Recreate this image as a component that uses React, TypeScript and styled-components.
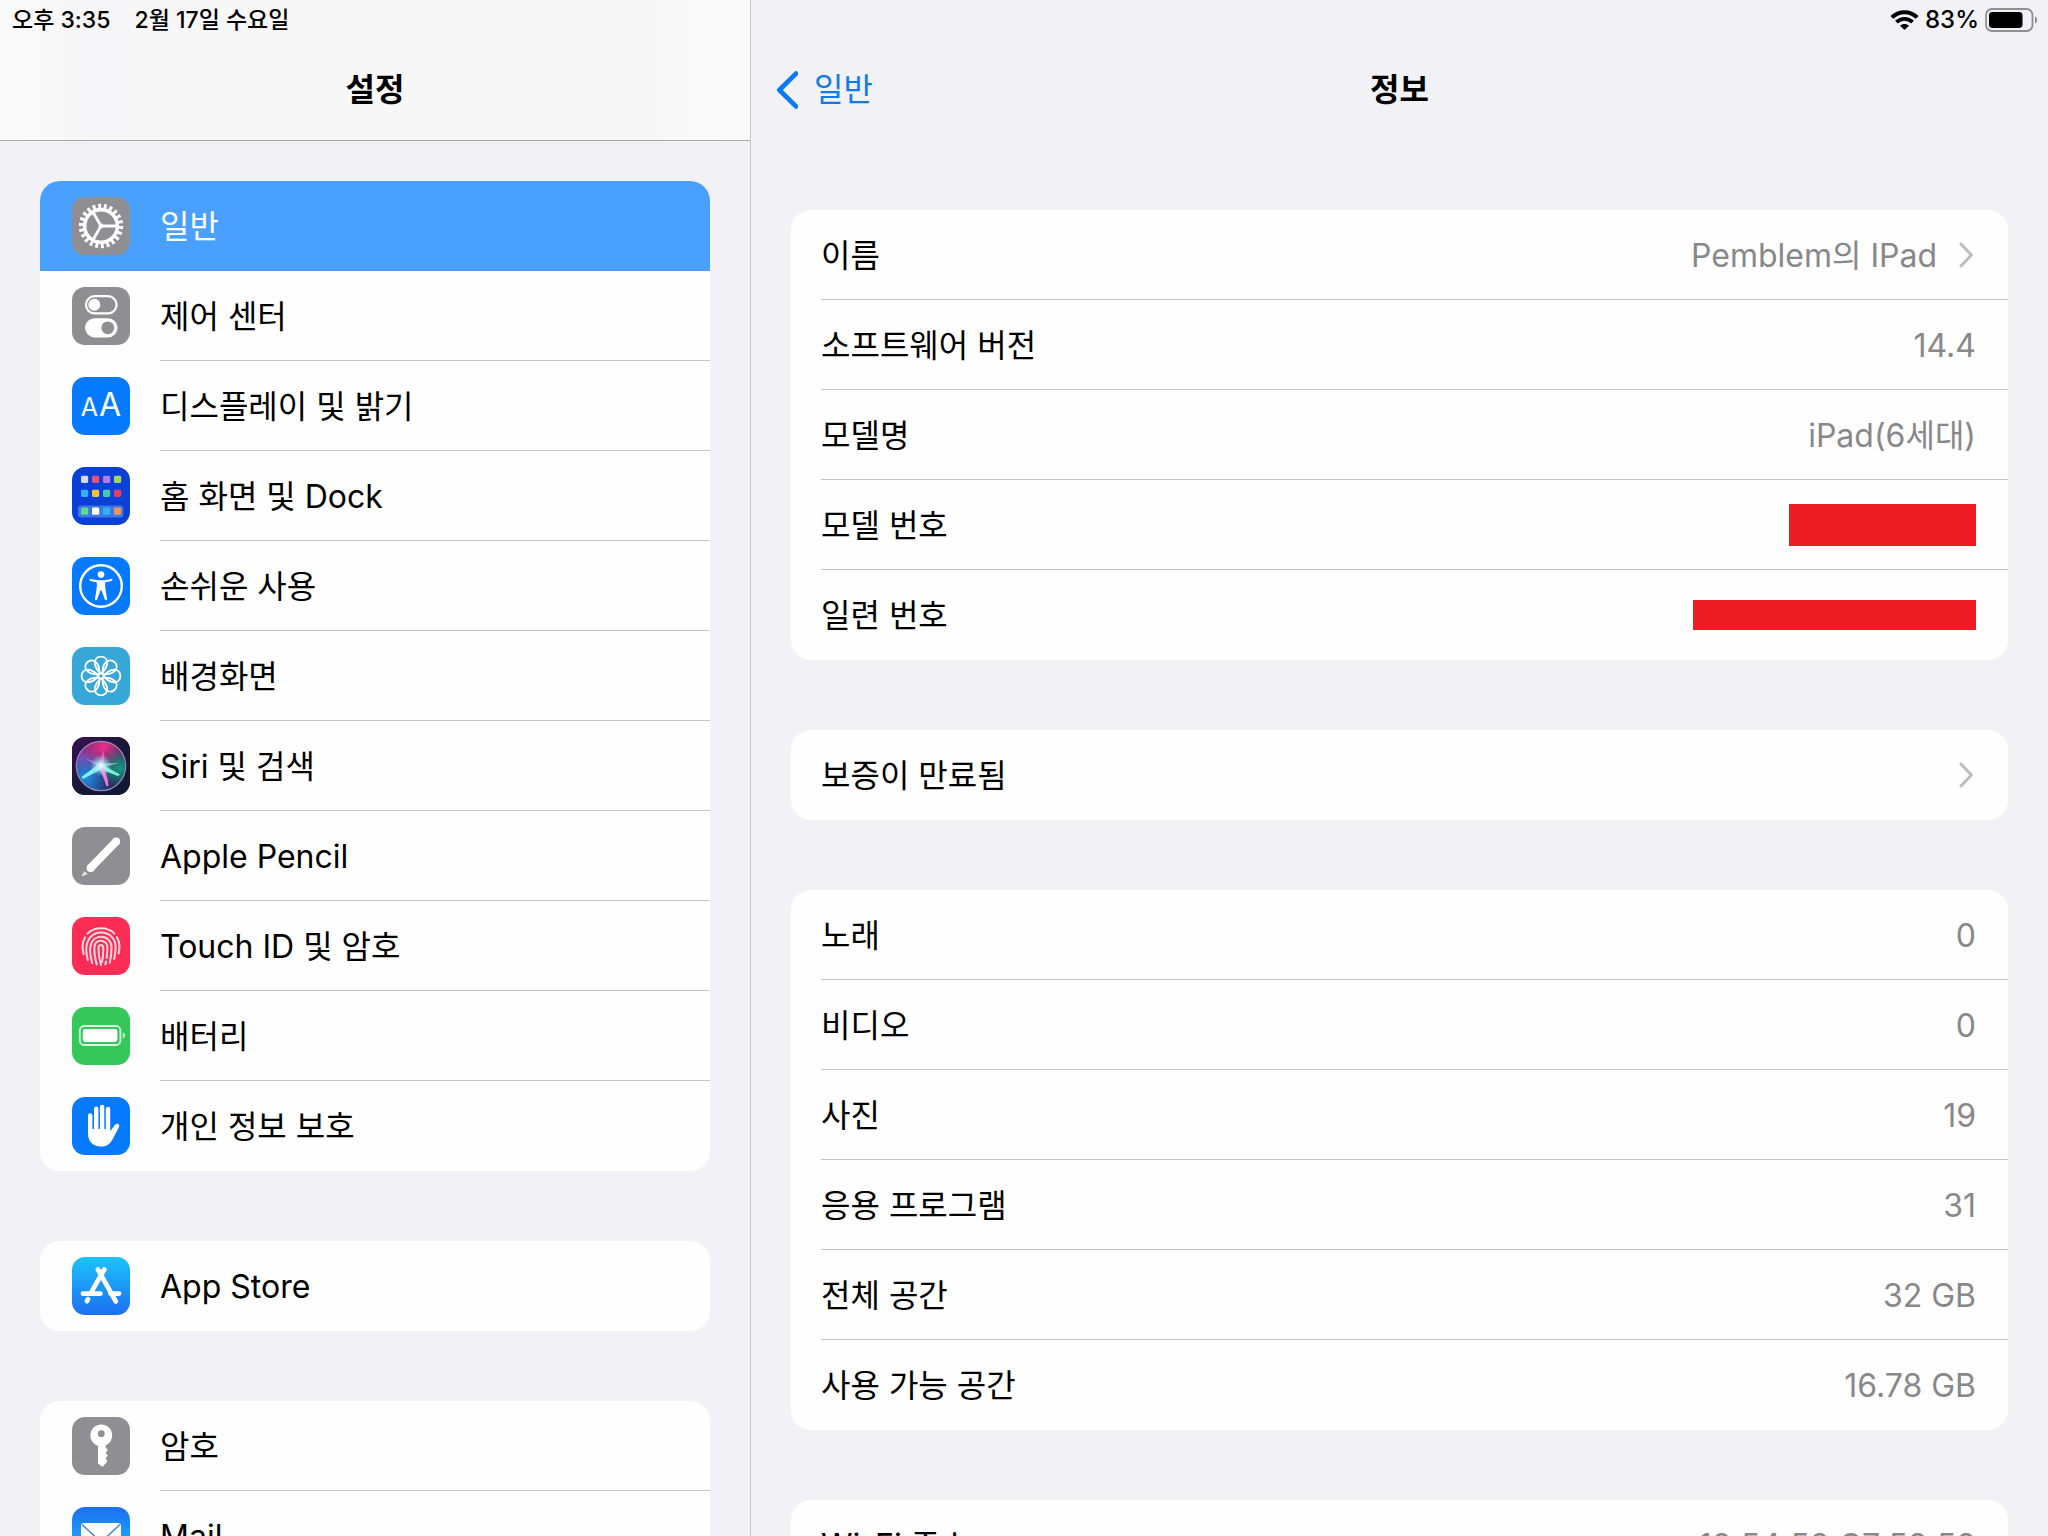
import React from "react";
import styled, { createGlobalStyle, css } from "styled-components";

const GlobalStyle = createGlobalStyle`
  * { box-sizing: border-box; }
  html, body { margin: 0; padding: 0; }
  body {
    background: #f2f1f6;
    color: #000;
    font-family: Inter, "Noto Sans CJK KR", sans-serif;
    font-size: 32px;
    line-height: 40px;
  }
  ul, h1, h2 { margin: 0; padding: 0; font: inherit; list-style: none; }
  a { color: inherit; text-decoration: none; }
`;

const Screen = styled.div`
  display: grid;
  grid-template-columns: 751px minmax(0, 1fr);
  height: 100vh;
  overflow: hidden;
`;

const Pane = styled.section<{ $divided?: boolean }>`
  display: flex;
  flex-direction: column;
  min-width: 0;
  min-height: 0;
  ${(p) => p.$divided && css`border-right: 1px solid #c8c7cc;`}
`;

const Header = styled.header<{ $bar?: boolean }>`
  flex: none;
  border-bottom: 1px solid ${(p) => (p.$bar ? "#a8a8aa" : "transparent")};
  background: ${(p) =>
    p.$bar ? "linear-gradient(90deg, #fafafa 0%, #f6f6f8 14%, #f7f7f7 24%, #f7f7f7 85%, #fafafa 100%)" : "none"};
`;

const StatusBar = styled.div<{ $end?: boolean }>`
  display: flex;
  align-items: center;
  justify-content: ${(p) => (p.$end ? "flex-end" : "flex-start")};
  gap: ${(p) => (p.$end ? 6 : 24)}px;
  height: 40px;
  padding: 0 10px 0 12px;
  font-size: ${(p) => (p.$end ? 24 : 23)}px;
  font-weight: 500;
`;

const NavBar = styled.nav`
  display: grid;
  grid-template-columns: 1fr auto 1fr;
  align-items: center;
  height: 100px;
  padding: 0 24px;
`;

const Title = styled.h1`
  grid-column: 2;
  font-weight: 600;
`;

const BackLink = styled.a`
  display: flex;
  align-items: center;
  gap: 16px;
  justify-self: start;
  color: #0f7ce6;
`;

const Scroller = styled.div<{ $top: number }>`
  flex: 1;
  min-height: 0;
  overflow-y: auto;
  scrollbar-width: none;
  display: flex;
  flex-direction: column;
  gap: 70px;
  padding: ${(p) => p.$top}px 40px 40px;
`;

const Card = styled.ul`
  flex: none;
  border-radius: 20px;
  background: #fefefe;
  overflow: hidden;
`;

const MenuLink = styled.a<{ $selected?: boolean }>`
  display: flex;
  align-items: center;
  gap: 30px;
  height: 90px;
  padding-left: 32px;
  ${(p) =>
    p.$selected &&
    css`
      background: #4aa0ff;
      color: #fff;
    `}
`;

const MenuLabel = styled.span<{ $line: boolean }>`
  display: flex;
  align-items: center;
  flex: 1;
  height: 100%;
  border-bottom: 1px solid ${(p) => (p.$line ? "#c6c6c8" : "transparent")};
`;

const RowText = styled.span`
  padding-top: 3px;
`;

const InfoItem = styled.li`
  padding-left: 30px;
  &:not(:last-child) > * {
    border-bottom-color: #c6c6c8;
  }
`;

const infoRow = css`
  display: flex;
  align-items: center;
  justify-content: space-between;
  height: 90px;
  padding-right: 32px;
  border-bottom: 1px solid transparent;
`;

const InfoRow = styled.div`${infoRow}`;
const InfoLink = styled.a`${infoRow}`;

const Value = styled.span`
  display: flex;
  align-items: center;
  gap: 22px;
  color: #88888a;
`;

const Redaction = styled.span<{ $w: number; $h: number }>`
  width: ${(p) => p.$w}px;
  height: ${(p) => p.$h}px;
  background: #ed1c24;
`;

const IconTile = styled.span<{ $bg: string }>`
  display: flex;
  align-items: center;
  justify-content: center;
  flex: none;
  width: 58px;
  height: 58px;
  border-radius: 13px;
  overflow: hidden;
  color: #fff;
  background: ${(p) => p.$bg};
`;

const Letters = styled.span`
  display: flex;
  align-items: baseline;
  gap: 1px;
  line-height: 32px;
`;
const SmallLetter = styled.span`font-size: 25px;`;
const LargeLetter = styled.span`font-size: 32px;`;

const Glyph = ({ children }: { children: React.ReactNode }) => (
  <svg width="58" height="58" viewBox="0 0 58 58" fill="none" aria-hidden="true">
    {children}
  </svg>
);

const Gear = () => (
  <Glyph>
    <circle cx="29" cy="29" r="19.4" stroke="#fff" strokeWidth="5.6" pathLength="44" strokeDasharray="1.05 0.95" />
    <circle cx="29" cy="29" r="16.4" stroke="#fff" strokeWidth="3.6" />
    <path d="M29 29H45M29 29L21 15.2M29 29L21 42.8" stroke="#fff" strokeWidth="2.8" />
    <circle cx="29" cy="29" r="2.4" fill="#fff" />
  </Glyph>
);

const Toggles = () => (
  <Glyph>
    <rect x="14" y="9.2" width="30.6" height="17.2" rx="8.6" stroke="#fff" strokeWidth="2.2" />
    <circle cx="22.3" cy="17.8" r="6" fill="#fff" />
    <rect x="13" y="31.2" width="32.6" height="19.2" rx="9.6" fill="#fff" />
    <circle cx="35.8" cy="40.8" r="6.4" fill="#8e8e93" />
  </Glyph>
);

const HOME_ROWS = [
  { y: 8.8, colors: ["#cfdcf8", "#e8507c", "#b07af5", "#a4d65e"] },
  { y: 22.8, colors: ["#35b1f2", "#f5bf3a", "#3fc9b0", "#e8405a"] },
  { y: 40.6, colors: ["#5fd98c", "#ffffff", "#2cb4f4", "#f0945c"] },
];

const HomeScreen = () => (
  <Glyph>
    <rect x="6" y="38.4" width="45.4" height="12" rx="3" fill="#3d78e4" />
    {HOME_ROWS.map((row) =>
      row.colors.map((c, i) => (
        <rect key={c} x={9 + i * 11} y={row.y} width="7.2" height="7.2" rx="1.4" fill={c} />
      ))
    )}
  </Glyph>
);

const Accessibility = () => (
  <Glyph>
    <circle cx="29" cy="29" r="20.8" stroke="#fff" strokeWidth="2.4" />
    <circle cx="29" cy="17.6" r="3.3" fill="#fff" />
    <path
      d="M19 21.9C22 22.6 26 23.2 29 23.2S36 22.6 39 21.9C40.8 21.6 41 23.6 39.4 24C37.4 24.5 35 24.9 33.2 25.2C33 28 33.1 30.5 33.6 33L35 41.6C35.2 43.6 33.4 44 32.8 42.2L29.6 33.4H28.4L25.2 42.2C24.6 44 22.8 43.6 23 41.6L24.4 33C24.9 30.5 25 28 24.8 25.2C23 24.9 20.6 24.5 18.6 24C17 23.6 17.2 21.6 19 21.9Z"
      fill="#fff"
    />
  </Glyph>
);

const Flower = () => (
  <Glyph>
    {[0, 45, 90, 135, 180, 225, 270, 315].map((a) => (
      <path
        key={a}
        d="M29 26.6C25.4 23.4 22.8 19.6 22.8 16C22.8 12.2 25.4 9.6 29 9.6S35.2 12.2 35.2 16C35.2 19.6 32.6 23.4 29 26.6Z"
        transform={`rotate(${a} 29 29)`}
        stroke="#fff"
        strokeWidth="1.9"
        strokeLinejoin="round"
      />
    ))}
  </Glyph>
);

const Siri = () => (
  <Glyph>
    <defs>
      <linearGradient id="siriBase" x1="0" y1="0" x2="1" y2="1">
        <stop offset="0" stopColor="#3a1152" />
        <stop offset="0.5" stopColor="#1a1738" />
        <stop offset="1" stopColor="#0c1a33" />
      </linearGradient>
      <radialGradient id="siriPink" cx="0.55" cy="0.1" r="0.55">
        <stop offset="0" stopColor="#f0308a" />
        <stop offset="1" stopColor="#f0308a" stopOpacity="0" />
      </radialGradient>
      <radialGradient id="siriPurple" cx="0.1" cy="0.35" r="0.5">
        <stop offset="0" stopColor="#8a3fae" />
        <stop offset="1" stopColor="#8a3fae" stopOpacity="0" />
      </radialGradient>
      <radialGradient id="siriBlue" cx="0.2" cy="0.75" r="0.55">
        <stop offset="0" stopColor="#1f8de0" />
        <stop offset="1" stopColor="#1f8de0" stopOpacity="0" />
      </radialGradient>
      <radialGradient id="siriGreen" cx="0.88" cy="0.55" r="0.42">
        <stop offset="0" stopColor="#159a80" />
        <stop offset="1" stopColor="#159a80" stopOpacity="0" />
      </radialGradient>
      <radialGradient id="siriGlow" cx="0.5" cy="0.5" r="0.5">
        <stop offset="0" stopColor="#fff" />
        <stop offset="0.3" stopColor="#c9f6ff" stopOpacity="0.8" />
        <stop offset="1" stopColor="#8fd8ff" stopOpacity="0" />
      </radialGradient>
    </defs>
    <rect width="58" height="58" fill="url(#siriBase)" />
    <circle cx="29" cy="29" r="24.5" fill="#26235c" />
    <circle cx="29" cy="29" r="24.5" fill="url(#siriPurple)" />
    <circle cx="29" cy="29" r="24.5" fill="url(#siriPink)" />
    <circle cx="29" cy="29" r="24.5" fill="url(#siriBlue)" />
    <circle cx="29" cy="29" r="24.5" fill="url(#siriGreen)" />
    <path d="M28 26L9.5 40L11 42L30 32Z" fill="#7df0f5" />
    <path d="M28 26L48 37.5L46 39L27 32Z" fill="#79f0d0" />
    <path d="M30.5 27C33.5 34 36 41 36.5 49L34.4 49C32.5 42 29.6 36 26.5 30Z" fill="#f57ad0" />
    <path d="M31 13C33 18 33 22 30.5 28L26.5 27C29 22 30 18 31 13Z" fill="#f06ac0" opacity="0.7" />
    <path d="M13 22C20 23 25 25 30 28L28 30C22 26 17 24 13 22Z" fill="#c27af0" opacity="0.7" />
    <path d="M29 26.4L47 26L30 30.6Z" fill="#7fd8c0" opacity="0.8" />
    <circle cx="29" cy="28.5" r="11" fill="url(#siriGlow)" />
    <circle cx="29" cy="29" r="24.7" stroke="#b9a8d8" strokeWidth="1.2" opacity="0.75" />
  </Glyph>
);

const PencilIcon = () => (
  <Glyph>
    <path d="M19 40.5L44 14.8" stroke="#fff" strokeWidth="8" />
    <circle cx="44.2" cy="14.6" r="4" fill="#fff" />
    <circle cx="18.6" cy="40.9" r="4" fill="#fff" />
    <path d="M12.6 44.2L15.6 47L11 49C10 49.4 9.7 48.8 10 48Z" fill="#e8e8ea" />
  </Glyph>
);

const Fingerprint = () => (
  <Glyph>
    <g stroke="#ffd9e0" strokeWidth="2" strokeLinecap="round">
      <path d="M11.6 37C10 31 10.2 25 13 20.4" />
      <path d="M15.6 16.6C22.6 9.6 35.4 9.6 42.4 16.6" />
      <path d="M44.9 20.2C47.8 25 48 31 46.6 36.4" />
      <path d="M15.8 43C14.2 37 13 30 16 24C19 17.8 24 15.6 29 15.6C37 15.6 43.4 21 43.6 29.6C43.7 34 43 38 42.2 42" />
      <path d="M20.2 46.2C18.6 40 17.4 33 18.6 28.5C19.8 23 24 19.7 29 19.7C35 19.7 39.3 24 39.5 30C39.6 36 38.8 41 37.8 45.8" />
      <path d="M24.7 47.4C23 41 22 35 22.4 30C22.8 26 25.5 23.8 29 23.8C32.5 23.8 35.3 26.5 35.4 30C35.5 35 35 38 34.6 41" />
      <path d="M34 44.6L33.4 47.6" />
      <path d="M29 48C27.2 42 26.4 35 26.5 30.5C26.6 28.7 27.5 27.9 28.9 27.9C30.3 27.9 31.2 29 31.2 30.5C31.3 36 31 41 30 45" />
    </g>
  </Glyph>
);

const BatteryTile = () => (
  <Glyph>
    <rect x="7.8" y="19" width="40.6" height="19" rx="4.6" stroke="#d8f7df" strokeWidth="1.8" />
    <rect x="10.8" y="22" width="34.6" height="13" rx="2.4" fill="#fff" />
    <path d="M50.8 25.6C53.8 26.4 53.8 30.6 50.8 31.4Z" fill="#d8f7df" />
  </Glyph>
);

const Hand = () => (
  <Glyph>
    <path d="M18.2 18.5V36M24.2 11.8V34M30.1 10V34M36 12V34" stroke="#fff" strokeWidth="4.4" strokeLinecap="round" />
    <path
      d="M16 32H38.2V34.4L42.4 28.4C43.6 26.8 45.4 26.4 46.6 27.2C47.6 27.9 47.4 29.2 46.8 30.4L40.6 42.2C38 47.2 34.4 49.6 28.6 49.6C21 49.6 16 44.6 16 36.6Z"
      fill="#fff"
    />
  </Glyph>
);

const AppStore = () => (
  <Glyph>
    <g stroke="#fff" strokeWidth="4.8" strokeLinecap="round">
      <path d="M32.2 12.6L19.6 34.6" />
      <path d="M16 42.2L14.9 44.2" />
      <path d="M26 12.6L43.8 44.4" />
      <path d="M11 36.6H28.4M38.6 36.6H47" />
    </g>
  </Glyph>
);

const KeyIcon = () => (
  <Glyph>
    <path
      fillRule="evenodd"
      d="M29.2 7.4A11 11 0 0 1 33.6 28.5V30.5L35.8 33L33.6 36L35.8 38.6L33.6 41.4L35.6 44L31 49.6H29.8L26 46.4V28.9A11 11 0 0 1 29.2 7.4ZM29.3 13.3A3.4 3.4 0 1 0 29.3 20.1A3.4 3.4 0 1 0 29.3 13.3Z"
      fill="#fff"
    />
  </Glyph>
);

const MailIcon = () => (
  <Glyph>
    <rect x="9" y="16" width="40" height="27" rx="3" fill="#fff" />
    <path d="M10 17.4L26 32.4C28 34.2 30 34.2 32 32.4L48 17.4M10 42L23 29.6M48 42L35 29.6" stroke="#3c86d8" strokeWidth="1.4" />
  </Glyph>
);

const Chevron = () => (
  <svg width="17" height="26" viewBox="0 0 17 26" fill="none" aria-hidden="true">
    <path d="M2 2L12.4 13L2 24" stroke="#bdbdc0" strokeWidth="3" strokeLinecap="round" strokeLinejoin="round" />
  </svg>
);

const BackChevron = () => (
  <svg width="23" height="38" viewBox="0 0 23 38" fill="none" aria-hidden="true">
    <path d="M21 2.6L4.4 19L21 35.4" stroke="#0a7af5" strokeWidth="4.8" strokeLinecap="round" strokeLinejoin="round" />
  </svg>
);

const WifiIcon = () => (
  <svg width="29" height="20" viewBox="0 0 29 20" fill="none" aria-hidden="true">
    <path d="M1.8 7.4C9 0.4 20 0.4 27.2 7.4" stroke="#000" strokeWidth="4" />
    <path d="M6.4 12.2C11 7.8 18 7.8 22.6 12.2" stroke="#000" strokeWidth="3.8" />
    <path d="M14.5 20L10 15.8C12.6 13.3 16.4 13.3 19 15.8Z" fill="#000" />
  </svg>
);

const BatteryStatus = () => (
  <svg width="53" height="24" viewBox="0 0 53 24" fill="none" aria-hidden="true">
    <rect x="1" y="1" width="46.5" height="22" rx="6" stroke="#8f8f93" strokeWidth="1.8" />
    <rect x="4" y="4" width="33.5" height="16" rx="3.4" fill="#000" />
    <path d="M50 8.4C52.8 9.2 52.8 14.8 50 15.6Z" fill="#8f8f93" />
  </svg>
);

type MenuItem = { label: string; bg: string; icon: React.ReactNode; selected?: boolean };

const MENU: MenuItem[][] = [
  [
    { label: "일반", bg: "#8e8e93", icon: <Gear />, selected: true },
    { label: "제어 센터", bg: "#8e8e93", icon: <Toggles /> },
    {
      label: "디스플레이 및 밝기",
      bg: "#057aff",
      icon: (
        <Letters aria-hidden="true">
          <SmallLetter>A</SmallLetter>
          <LargeLetter>A</LargeLetter>
        </Letters>
      ),
    },
    { label: "홈 화면 및 Dock", bg: "#0a3fd8", icon: <HomeScreen /> },
    { label: "손쉬운 사용", bg: "#057aff", icon: <Accessibility /> },
    { label: "배경화면", bg: "#37a7d7", icon: <Flower /> },
    { label: "Siri 및 검색", bg: "#1a1738", icon: <Siri /> },
    { label: "Apple Pencil", bg: "#8e8e93", icon: <PencilIcon /> },
    { label: "Touch ID 및 암호", bg: "#fc2d55", icon: <Fingerprint /> },
    { label: "배터리", bg: "#36c75b", icon: <BatteryTile /> },
    { label: "개인 정보 보호", bg: "#057aff", icon: <Hand /> },
  ],
  [{ label: "App Store", bg: "linear-gradient(#1cc3fb, #1c6ff2)", icon: <AppStore /> }],
  [
    { label: "암호", bg: "#8e8e93", icon: <KeyIcon /> },
    { label: "Mail", bg: "linear-gradient(#1d6ff2, #1ac8fc)", icon: <MailIcon /> },
  ],
];

type Info = { label: string; value?: string; link?: boolean; redact?: [number, number] };

const INFO: Info[][] = [
  [
    { label: "이름", value: "Pemblem의 IPad", link: true },
    { label: "소프트웨어 버전", value: "14.4" },
    { label: "모델명", value: "iPad(6세대)" },
    { label: "모델 번호", redact: [187, 42] },
    { label: "일련 번호", redact: [283, 30] },
  ],
  [{ label: "보증이 만료됨", link: true }],
  [
    { label: "노래", value: "0" },
    { label: "비디오", value: "0" },
    { label: "사진", value: "19" },
    { label: "응용 프로그램", value: "31" },
    { label: "전체 공간", value: "32 GB" },
    { label: "사용 가능 공간", value: "16.78 GB" },
  ],
  [{ label: "Wi-Fi 주소", value: "18:54:58:C7:58:58" }],
];

const InfoEntry = ({ label, value, link, redact }: Info) => {
  const content = (
    <>
      <RowText>{label}</RowText>
      <Value>
        {value && <RowText>{value}</RowText>}
        {redact && <Redaction $w={redact[0]} $h={redact[1]} />}
        {link && <Chevron />}
      </Value>
    </>
  );
  return <InfoItem>{link ? <InfoLink href="#">{content}</InfoLink> : <InfoRow>{content}</InfoRow>}</InfoItem>;
};

export default function App() {
  return (
    <>
      <GlobalStyle />
      <Screen lang="ko">
        <Pane $divided>
          <Header $bar>
            <StatusBar>
              <span>오후 3:35</span>
              <span>2월 17일 수요일</span>
            </StatusBar>
            <NavBar>
              <Title>설정</Title>
            </NavBar>
          </Header>
          <Scroller $top={40}>
            {MENU.map((group, g) => (
              <Card key={g}>
                {group.map((item, i) => (
                  <li key={item.label}>
                    <MenuLink href="#" $selected={item.selected} aria-current={item.selected ? "page" : undefined}>
                      <IconTile $bg={item.bg}>{item.icon}</IconTile>
                      <MenuLabel $line={!item.selected && i < group.length - 1}>
                        <RowText>{item.label}</RowText>
                      </MenuLabel>
                    </MenuLink>
                  </li>
                ))}
              </Card>
            ))}
          </Scroller>
        </Pane>
        <Pane>
          <Header>
            <StatusBar $end>
              <WifiIcon />
              <span>83%</span>
              <BatteryStatus />
            </StatusBar>
            <NavBar>
              <BackLink href="#">
                <BackChevron />
                일반
              </BackLink>
              <Title as="h2">정보</Title>
            </NavBar>
          </Header>
          <Scroller $top={69}>
            {INFO.map((group, g) => (
              <Card key={g}>
                {group.map((row) => (
                  <InfoEntry key={row.label} {...row} />
                ))}
              </Card>
            ))}
          </Scroller>
        </Pane>
      </Screen>
    </>
  );
}
